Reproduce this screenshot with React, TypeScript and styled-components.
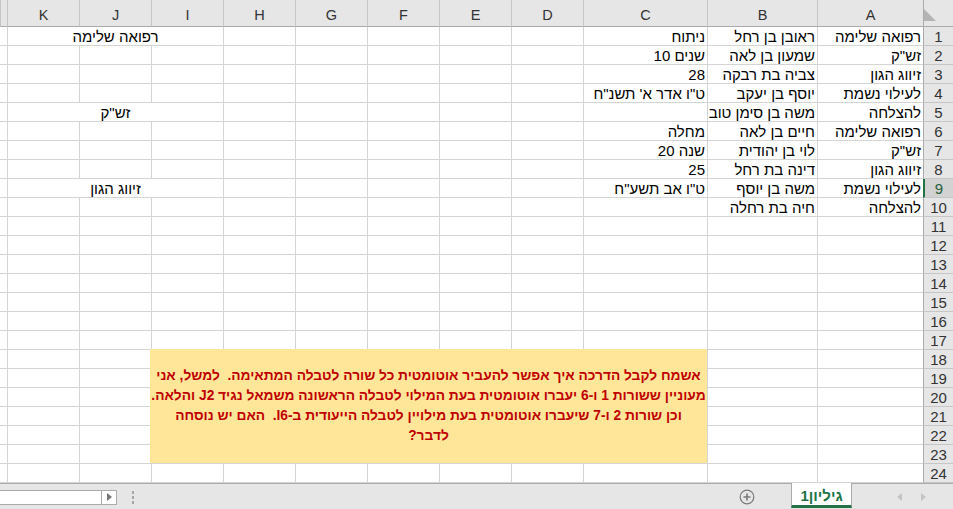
import { FC } from "react";
import styled, { createGlobalStyle } from "styled-components";

const GlobalStyle = createGlobalStyle`
   html, body {
      margin: 0;
      padding: 0;
      background: #ffffff;
   }
   body {
      font-family: "Liberation Sans", Arial, sans-serif;
      overflow: hidden;
   }
`;

const Window = styled.div`
   width: 953px;
   height: 509px;
   display: flex;
   flex-direction: column;
   direction: rtl;
   overflow: hidden;
   background: #ffffff;
`;

const Sheet = styled.div`
   position: relative;
   height: 483px;
   overflow: hidden;
`;

const Grid = styled.div`
   display: grid;
   grid-template-columns: 30px 106px 110px 124px repeat(8, 72px) 1fr;
   grid-template-rows: 27px repeat(24, 19px);
`;

const Corner = styled.div`
   background: #e6e6e6;
   border-left: 1px solid #ababab;
   border-bottom: 1px solid #ababab;
   display: flex;
   align-items: flex-end;
   justify-content: flex-end;
   padding: 0 5px 5px 0;
   box-sizing: border-box;
`;

const ColHeader = styled.div`
   background: #e6e6e6;
   border-left: 1px solid #c6c6c6;
   border-bottom: 1px solid #ababab;
   box-sizing: border-box;
   font-size: 14.5px;
   color: #333333;
   display: flex;
   align-items: center;
   justify-content: center;
   padding-top: 3px;
`;

const RowHeader = styled.div<{ $selected?: boolean }>`
   background: ${(p) => (p.$selected ? "#d2d2d2" : "#e6e6e6")};
   border-left: ${(p) => (p.$selected ? "2px solid #217346" : "1px solid #ababab")};
   border-bottom: 1px solid #c6c6c6;
   box-sizing: border-box;
   font-size: 15px;
   color: ${(p) => (p.$selected ? "#1e5e38" : "#333333")};
   display: flex;
   align-items: center;
   justify-content: center;
   padding-top: 1px;
`;

const Cell = styled.div<{ $align?: "right" | "center"; $span?: number }>`
   grid-column: span ${(p) => p.$span ?? 1};
   border-left: 1px solid #d4d4d4;
   border-bottom: 1px solid #d4d4d4;
   box-sizing: border-box;
   text-align: ${(p) => p.$align ?? "right"};
   white-space: nowrap;
   font-size: 15px;
   line-height: 19px;
   color: #000000;
   padding: 0 2px;
`;

const Filler = styled.div`
   border-bottom: 1px solid #d4d4d4;
`;

const TextBox = styled.div`
   position: absolute;
   left: 150px;
   top: 349px;
   width: 557px;
   height: 114px;
   background: #ffe699;
   display: flex;
   flex-direction: column;
   justify-content: center;
   align-items: center;
   color: #c00000;
   font-weight: bold;
   font-size: 13.75px;
   line-height: 20px;
   text-align: center;
`;

const TextLine = styled.span`
   display: block;
   white-space: pre;
`;

const TabBar = styled.div`
   height: 26px;
   box-sizing: border-box;
   border-top: 1px solid #ababab;
   background: #e6e6e6;
   display: flex;
   align-items: stretch;
`;

const NavArrows = styled.div`
   width: 101px;
   display: flex;
   align-items: center;
   gap: 19px;
   padding-right: 27px;
   box-sizing: border-box;
`;

const Tab = styled.div`
   width: 61px;
   margin-top: -1px;
   margin-bottom: 1px;
   background: #ffffff;
   border-left: 1px solid #ababab;
   border-right: 1px solid #ababab;
   border-bottom: 3px solid #217346;
   box-sizing: border-box;
   color: #217346;
   font-weight: bold;
   font-size: 15px;
   display: flex;
   align-items: center;
   justify-content: center;
   padding-top: 2px;
`;

const PlusButton = styled.div`
   width: 28px;
   margin-right: 30px;
   display: flex;
   align-items: center;
   justify-content: center;
`;

const LeftGroup = styled.div`
   margin-right: auto;
   display: flex;
   align-items: center;
   gap: 15px;
`;

const Dots = styled.div`
   display: flex;
   flex-direction: column;
   gap: 2px;
   padding-top: 2px;
`;

const Dot = styled.span`
   width: 2px;
   height: 3px;
   background: #a6a6a6;
`;

const ScrollTrack = styled.div`
   width: 117px;
   height: 15px;
   margin-top: 1px;
   background: #ffffff;
   border: 1px solid #ababab;
   border-left: none;
   box-sizing: border-box;
   display: flex;
`;

const ScrollArrow = styled.div`
   width: 14px;
   border-left: 1px solid #ababab;
   display: flex;
   align-items: center;
   justify-content: center;
`;

type RowData = { a?: string; b?: string; c?: string; merged?: string };

// cells inherit the sheet's rtl direction; the two "number + word" cells are
// written word-first so the number lands on the left, as in the sheet
const rows: RowData[] = [
   { a: "רפואה שלימה", b: "ראובן בן רחל", c: "ניתוח", merged: "רפואה שלימה" },
   { a: 'זש"ק', b: "שמעון בן לאה", c: "שנים 10" },
   { a: "זיווג הגון", b: "צביה בת רבקה", c: "28" },
   { a: "לעילוי נשמת", b: "יוסף בן יעקב", c: 'ט"ו אדר א\' תשנ"ח' },
   { a: "להצלחה", b: "משה בן סימן טוב", merged: 'זש"ק' },
   { a: "רפואה שלימה", b: "חיים בן לאה", c: "מחלה" },
   { a: 'זש"ק', b: "לוי בן יהודית", c: "שנה 20" },
   { a: "זיווג הגון", b: "דינה בת רחל", c: "25" },
   { a: "לעילוי נשמת", b: "משה בן יוסף", c: 'ט"ו אב תשע"ח', merged: "זיווג הגון" },
   { a: "להצלחה", b: "חיה בת רחלה" },
];

const letters = ["A", "B", "C", "D", "E", "F", "G", "H", "I", "J", "K"];
const SELECTED_ROW = 9;

const SheetRow: FC<{ index: number; data?: RowData }> = ({ index, data }) => {
   const d = data ?? {};
   return (
      <>
         <RowHeader $selected={index === SELECTED_ROW}>{index}</RowHeader>
         <Cell>{d.a}</Cell>
         <Cell>{d.b}</Cell>
         <Cell>{d.c}</Cell>
         {["D", "E", "F", "G", "H"].map((l) => (
            <Cell key={l} />
         ))}
         {d.merged ? (
            <Cell $span={3} $align="center">
               {d.merged}
            </Cell>
         ) : (
            <>
               <Cell />
               <Cell />
               <Cell />
            </>
         )}
         <Filler />
      </>
   );
};

const Triangle: FC<{ dir: "left" | "right"; color: string }> = ({ dir, color }) => (
   <svg width="5" height="8" viewBox="0 0 5 8">
      <path d={dir === "left" ? "M5 0 L0 4 L5 8 Z" : "M0 0 L5 4 L0 8 Z"} fill={color} />
   </svg>
);

const App: FC = () => {
   return (
      <>
         <GlobalStyle />
         <Window>
            <Sheet>
               <Grid>
                  <Corner>
                     <svg width="12" height="12" viewBox="0 0 12 12">
                        <path d="M0 0 L12 12 L0 12 Z" fill="#b4b4b4" />
                     </svg>
                  </Corner>
                  {letters.map((l) => (
                     <ColHeader key={l}>{l}</ColHeader>
                  ))}
                  <ColHeader />
                  {Array.from({ length: 24 }, (_, i) => (
                     <SheetRow key={i} index={i + 1} data={rows[i]} />
                  ))}
               </Grid>
               <TextBox>
                  <TextLine>אשמח לקבל הדרכה איך אפשר להעביר אוטומטית כל שורה לטבלה המתאימה.  למשל, אני</TextLine>
                  <TextLine>מעוניין ששורות 1 ו-6 יעברו אוטומטית בעת המילוי לטבלה הראשונה משמאל נגיד J2 והלאה.</TextLine>
                  <TextLine>וכן שורות 2 ו-7 שיעברו אוטומטית בעת מילויין לטבלה הייעודית ב-I6.  האם יש נוסחה</TextLine>
                  <TextLine>לדבר?</TextLine>
               </TextBox>
            </Sheet>
            <TabBar>
               <NavArrows>
                  <Triangle dir="right" color="#c3c3c3" />
                  <Triangle dir="left" color="#c3c3c3" />
               </NavArrows>
               <Tab>גיליון1</Tab>
               <PlusButton>
                  <svg width="16" height="16" viewBox="0 0 16 16">
                     <circle cx="8" cy="8" r="6.8" fill="none" stroke="#7a7a7a" strokeWidth="1.2" />
                     <path d="M8 4.5 V11.5 M4.5 8 H11.5" stroke="#7a7a7a" strokeWidth="1.6" />
                  </svg>
               </PlusButton>
               <LeftGroup>
                  <Dots>
                     <Dot />
                     <Dot />
                     <Dot />
                  </Dots>
                  <ScrollTrack>
                     <ScrollArrow>
                        <Triangle dir="right" color="#777777" />
                     </ScrollArrow>
                  </ScrollTrack>
               </LeftGroup>
            </TabBar>
         </Window>
      </>
   );
};

export default App;
